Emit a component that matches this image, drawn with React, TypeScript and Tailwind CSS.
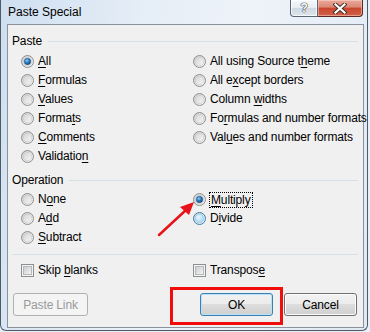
import React from "react";

function Radio({ checked = false, hover = false }: { checked?: boolean; hover?: boolean }) {
  return (
    <svg width="13" height="13" viewBox="0 0 13 13" className="shrink-0">
      <defs>
        <linearGradient id="rOuter" x1="0" y1="0" x2="1" y2="1">
          <stop offset="0" stopColor="#cfcfcf" />
          <stop offset="1" stopColor="#f8f8f8" />
        </linearGradient>
        <linearGradient id="rInner" x1="0" y1="0" x2="1" y2="1">
          <stop offset="0" stopColor="#d4d4d4" />
          <stop offset="1" stopColor="#f6f6f6" />
        </linearGradient>
        <radialGradient id="rHover" cx="0.4" cy="0.35" r="0.7">
          <stop offset="0" stopColor="#eaf7fe" />
          <stop offset="1" stopColor="#9fd3f1" />
        </radialGradient>
        <radialGradient id="rDot" cx="0.4" cy="0.35" r="0.75">
          <stop offset="0" stopColor="#8fd0f7" />
          <stop offset="0.45" stopColor="#2f7cc1" />
          <stop offset="1" stopColor="#0c3a6e" />
        </radialGradient>
      </defs>
      <circle cx="6.5" cy="6.5" r="6" fill="url(#rOuter)" stroke={hover ? "#3c7fb1" : "#8e8f8f"} strokeWidth="1" />
      <circle cx="6.5" cy="6.5" r="4.3" fill={hover ? "url(#rHover)" : "url(#rInner)"} stroke={hover ? "#8cc6e8" : "#c4c4c4"} strokeWidth="0.6" />
      {checked && <circle cx="6.5" cy="6.5" r="3.2" fill="url(#rDot)" stroke="#1b4f85" strokeWidth="0.5" />}
    </svg>
  );
}

function Check() {
  return (
    <svg width="13" height="13" viewBox="0 0 13 13" className="shrink-0">
      <defs>
        <linearGradient id="cInner" x1="0" y1="0" x2="1" y2="1">
          <stop offset="0" stopColor="#cbcbcb" />
          <stop offset="1" stopColor="#f6f6f6" />
        </linearGradient>
      </defs>
      <rect x="0.5" y="0.5" width="12" height="12" fill="#f4f4f4" stroke="#8e8f8f" />
      <rect x="2.5" y="2.5" width="8" height="8" fill="url(#cInner)" stroke="#b5b8bc" strokeWidth="1" />
    </svg>
  );
}

function Item({ children, checked, hover, check }: { children: React.ReactNode; checked?: boolean; hover?: boolean; check?: boolean }) {
  return (
    <div className="h-[19px] flex items-center gap-[4px] whitespace-nowrap">
      {check ? <Check /> : <Radio checked={checked} hover={hover} />}
      <span className="leading-[15px]">{children}</span>
    </div>
  );
}

function Header({ label }: { label: string }) {
  return (
    <div className="h-[20px] flex items-center">
      <span className="leading-[15px]">{label}</span>
      <div className="flex-1 h-px bg-[#d5dfe6] ml-[6px]" />
    </div>
  );
}

function U({ children }: { children: React.ReactNode }) {
  return <span className="underline underline-offset-[2px] decoration-1">{children}</span>;
}

export default function App() {
  return (
    <div className="w-[370px] h-[332px] relative overflow-hidden bg-[#e8eff7] font-['Liberation_Sans',Arial,sans-serif] text-[12px] tracking-[-0.15px] text-black">
      <div className="w-[368px] h-[331px] flex flex-col border-x border-b border-[#4f5a67] rounded-b-[6px] bg-[linear-gradient(100deg,#cfdff0_0%,#e6eef7_35%,#eef3f9_60%,#dfe9f4_100%)]">
        {/* title bar */}
        <div className="h-[24px] flex justify-between items-start">
          <span className="ml-[7px] mt-[4px] leading-[16px] text-[12px] tracking-normal">Paste Special</span>
          <div className="flex mr-[4px]">
            <div className="w-[28px] h-[17px] border border-t-0 border-[#5b6675] rounded-bl-[4px] bg-[linear-gradient(to_bottom,#f7f9fb_0%,#e7ecf1_50%,#cfd8e1_50%,#dde5ec_100%)] shadow-[inset_0_0_0_1px_rgba(255,255,255,0.7)] flex items-center justify-center">
              <span className="text-white font-bold text-[12px] leading-[14px] [text-shadow:0_0_1px_#333,0_0_1px_#333,0_0_1px_#333]">?</span>
            </div>
            <div className="w-[45px] h-[17px] border border-t-0 border-l-0 border-[#5a2a22] rounded-br-[4px] bg-[linear-gradient(to_bottom,#e9a99b_0%,#dc8774_45%,#c9462d_50%,#d0624a_100%)] shadow-[inset_0_0_0_1px_rgba(255,220,210,0.5)] flex items-center justify-center">
              <svg width="14" height="11" viewBox="0 0 14 11">
                <path d="M2.5 1.5 L11.5 9.5 M11.5 1.5 L2.5 9.5" stroke="#3b2a28" strokeWidth="4" strokeLinecap="square" />
                <path d="M2.5 1.5 L11.5 9.5 M11.5 1.5 L2.5 9.5" stroke="#ffffff" strokeWidth="2.2" strokeLinecap="square" />
              </svg>
            </div>
          </div>
        </div>
        {/* client area */}
        <div className="ml-[6px] w-[357px] h-[304px] border border-[#8a939c] bg-[#f0f0f0] pl-[4px] pr-[5px] pt-[6px] flex flex-col">
          <Header label="Paste" />
          <div className="mt-[1px] flex">
            <div className="ml-[9px] w-[172px] shrink-0 flex flex-col">
              <Item checked><U>A</U>ll</Item>
              <Item><U>F</U>ormulas</Item>
              <Item><U>V</U>alues</Item>
              <Item>Forma<U>t</U>s</Item>
              <Item><U>C</U>omments</Item>
              <Item>Validatio<U>n</U></Item>
            </div>
            <div className="flex flex-col">
              <Item>All using Source t<U>h</U>eme</Item>
              <Item>All e<U>x</U>cept borders</Item>
              <Item>Column <U>w</U>idths</Item>
              <Item>Fo<U>r</U>mulas and number formats</Item>
              <Item>Val<U>u</U>es and number formats</Item>
            </div>
          </div>
          <div className="mt-[4px]">
            <Header label="Operation" />
          </div>
          <div className="flex">
            <div className="ml-[9px] w-[172px] shrink-0 flex flex-col">
              <Item>N<U>o</U>ne</Item>
              <Item>A<U>d</U>d</Item>
              <Item><U>S</U>ubtract</Item>
            </div>
            <div className="flex flex-col">
              <div className="h-[19px] flex items-center gap-[3px] whitespace-nowrap">
                <Radio checked />
                <span className="leading-[14px] border border-dotted border-black px-[1px]"><U>M</U>ultiply</span>
              </div>
              <Item hover>D<U>i</U>vide</Item>
            </div>
          </div>
          <div className="mt-[7px] h-px bg-[#d5dfe6]" />
          <div className="mt-[6px] flex">
            <div className="ml-[9px] w-[172px] shrink-0">
              <Item check>Skip <U>b</U>lanks</Item>
            </div>
            <Item check>Transpos<U>e</U></Item>
          </div>
          <div className="mt-[13px] flex items-center">
            <div className="ml-[1px] w-[75px] h-[23px] rounded-[3px] border border-[#adb2b5] bg-[#f4f4f4] text-[#9a9a9a] flex items-center justify-center">
              Paste Link
            </div>
            <div className="flex-1" />
            <div className="w-[73px] h-[23px] rounded-[3px] border border-[#3c7fb1] bg-[linear-gradient(to_bottom,#f2f2f2_0%,#ebebeb_50%,#dddddd_50%,#cfcfcf_100%)] shadow-[inset_0_0_0_1px_#b6e2f7] flex items-center justify-center">
              OK
            </div>
            <div className="ml-[11px] mr-[1px] w-[73px] h-[23px] rounded-[3px] border border-[#707070] bg-[linear-gradient(to_bottom,#f2f2f2_0%,#ebebeb_50%,#dddddd_50%,#cfcfcf_100%)] shadow-[inset_0_0_0_1px_#fcfcfc] flex items-center justify-center">
              Cancel
            </div>
          </div>
        </div>
      </div>
      {/* annotations */}
      <div className="absolute left-[170px] top-[287px] w-[113px] h-[38px] border-[3px] border-[#f20d0d]" />
      <svg className="absolute left-0 top-0 pointer-events-none" width="370" height="332">
        <line x1="159" y1="235" x2="186" y2="210" stroke="#e8121a" strokeWidth="2.5" strokeLinecap="round" />
        <polygon points="194,202 180,207 189,215" fill="#e8121a" />
      </svg>
    </div>
  );
}
